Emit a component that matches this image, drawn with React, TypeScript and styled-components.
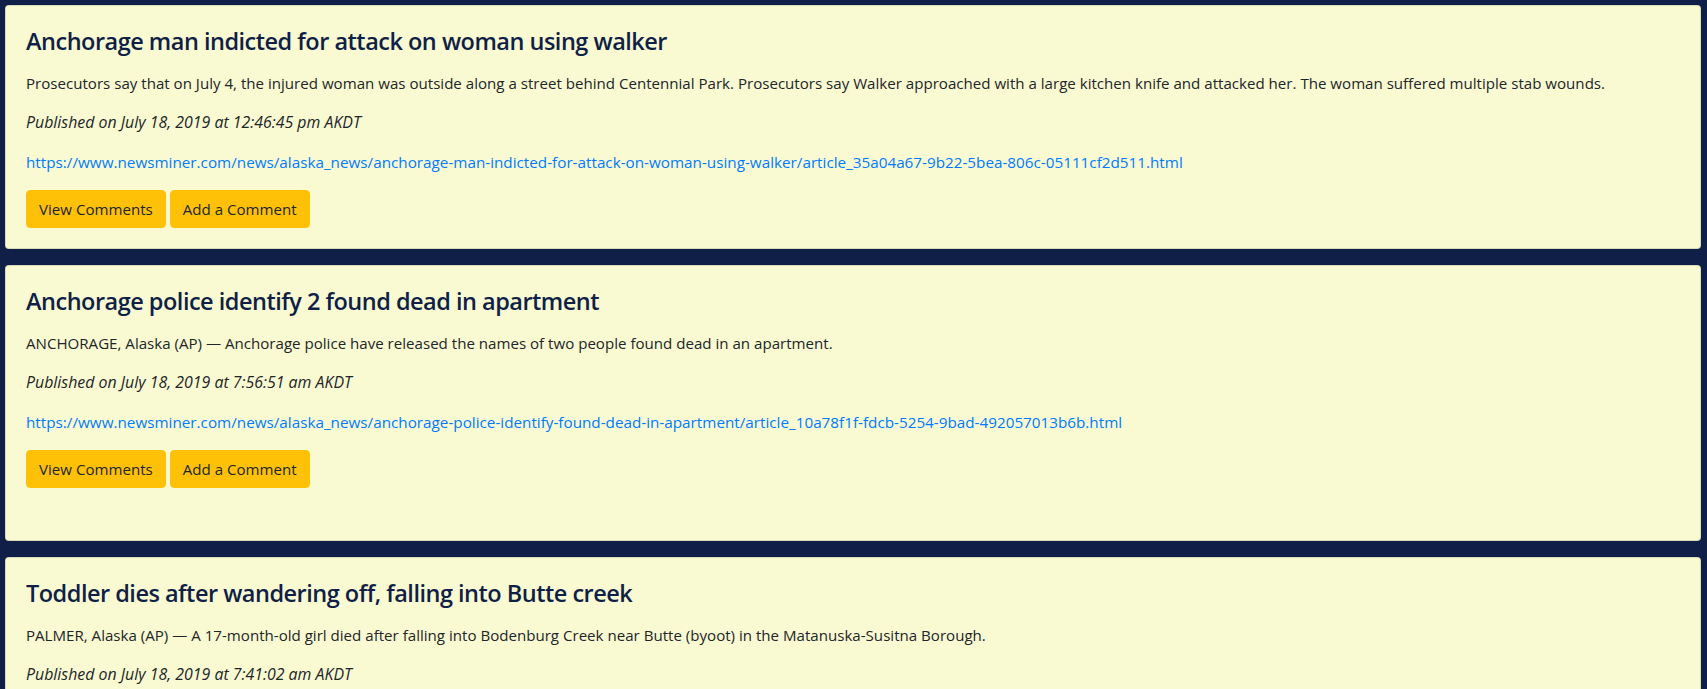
import React from "react";
import styled, { createGlobalStyle } from "styled-components";

const GlobalStyle = createGlobalStyle`
  html, body {
    margin: 0;
    padding: 0;
    background: #0f1f47;
  }
  body {
    font-family: "Open Sans", "Noto Sans", sans-serif;
    color: #212529;
  }
  * { box-sizing: border-box; }
`;

const Page = styled.main`
  display: flex;
  flex-direction: column;
  gap: 16px;
  padding: 5px 6px 5px 5px;
  min-height: 100vh;
  background: #0f1f47;
`;

const Card = styled.article<{ $extra?: number }>`
  display: flex;
  flex-direction: column;
  background: #fafad2;
  border: 1px solid rgba(0, 0, 0, 0.125);
  border-radius: 4px;
  padding: 20px 20px ${(p) => 20 + (p.$extra ?? 0)}px;
`;

const Title = styled.h4`
  margin: 0 0 14.5px;
  font-size: 23.5px;
  line-height: 30px;
  font-weight: 600;
  letter-spacing: -0.5px;
  color: #0f1f47;
`;

const Summary = styled.p`
  margin: 0 0 15.5px;
  font-size: 15.1px;
  line-height: 24px;
  color: #212529;
`;

const Published = styled.p`
  margin: 0 0 15.5px;
  font-size: 15.9px;
  line-height: 24px;
  font-style: italic;
  color: #212529;
`;

const Link = styled.a`
  display: block;
  margin: 0 0 16.5px;
  font-size: 15.25px;
  line-height: 24px;
  color: #007bff;
  text-decoration: none;
  white-space: nowrap;
`;

const Actions = styled.div`
  display: flex;
  gap: 4px;
`;

const Button = styled.button`
  font-family: inherit;
  font-size: 15.1px;
  line-height: 24px;
  padding: 6px 12px;
  color: #212529;
  background: #ffc107;
  border: 1px solid #ffc107;
  border-radius: 4px;
  cursor: pointer;
`;

type Article = {
  title: string;
  summary: string;
  published: string;
  url: string;
  extra?: number;
};

const articles: Article[] = [
  {
    title: "Anchorage man indicted for attack on woman using walker",
    summary:
      "Prosecutors say that on July 4, the injured woman was outside along a street behind Centennial Park. Prosecutors say Walker approached with a large kitchen knife and attacked her. The woman suffered multiple stab wounds.",
    published: "Published on July 18, 2019 at 12:46:45 pm AKDT",
    url: "https://www.newsminer.com/news/alaska_news/anchorage-man-indicted-for-attack-on-woman-using-walker/article_35a04a67-9b22-5bea-806c-05111cf2d511.html",
  },
  {
    title: "Anchorage police identify 2 found dead in apartment",
    summary:
      "ANCHORAGE, Alaska (AP) — Anchorage police have released the names of two people found dead in an apartment.",
    published: "Published on July 18, 2019 at 7:56:51 am AKDT",
    url: "https://www.newsminer.com/news/alaska_news/anchorage-police-identify-found-dead-in-apartment/article_10a78f1f-fdcb-5254-9bad-492057013b6b.html",
    extra: 32,
  },
  {
    title: "Toddler dies after wandering off, falling into Butte creek",
    summary:
      "PALMER, Alaska (AP) — A 17-month-old girl died after falling into Bodenburg Creek near Butte (byoot) in the Matanuska-Susitna Borough.",
    published: "Published on July 18, 2019 at 7:41:02 am AKDT",
    url: "https://www.newsminer.com/news/alaska_news/toddler-dies-after-wandering-off-falling-into-butte-creek/article_6f1c2a3e-a9b1-11e9-8f4a-7b2d6c8e1f30.html",
  },
];

export default function App() {
  return (
    <>
      <GlobalStyle />
      <Page>
        {articles.map((a) => (
          <Card key={a.title} $extra={a.extra}>
            <Title>{a.title}</Title>
            <Summary>{a.summary}</Summary>
            <Published>{a.published}</Published>
            <Link href={a.url}>{a.url}</Link>
            <Actions>
              <Button type="button">View Comments</Button>
              <Button type="button">Add a Comment</Button>
            </Actions>
          </Card>
        ))}
      </Page>
    </>
  );
}
